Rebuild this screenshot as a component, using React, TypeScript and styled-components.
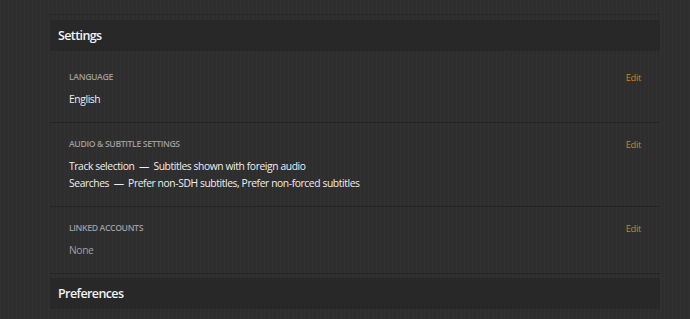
import styled, { createGlobalStyle } from 'styled-components';

interface SettingSection {
    title: string;
    values: string[];
    muted?: boolean;
}

const sections: SettingSection[] = [
    { title: 'Language', values: ['English'] },
    {
        title: 'Audio & Subtitle Settings',
        values: [
            'Track selection \u00a0\u2014\u00a0 Subtitles shown with foreign audio',
            'Searches \u00a0\u2014\u00a0 Prefer non-SDH subtitles, Prefer non-forced subtitles',
        ],
    },
    { title: 'Linked Accounts', values: ['None'], muted: true },
];

function App(): JSX.Element {
    return (
        <Page>
            <GlobalStyle />
            <TopRule />
            <PanelHeader>Settings</PanelHeader>
            <SectionList>
                {sections.map(section => (
                    <Section key={section.title}>
                        <SectionTop>
                            <Label>{section.title}</Label>
                            <EditLink href="#">Edit</EditLink>
                        </SectionTop>
                        {section.values.map(value => (
                            <Value key={value} $muted={section.muted}>{value}</Value>
                        ))}
                    </Section>
                ))}
            </SectionList>
            <PanelHeader $spaced>Preferences</PanelHeader>
        </Page>
    );
}

const GlobalStyle = createGlobalStyle`
  html, body {
    margin: 0;
    padding: 0;
    background-color: #2e2e2e;
  }
  body {
    font-family: "Open Sans", "Liberation Sans", sans-serif;
  }
`;

const Page = styled.div`
  width: 690px;
  height: 319px;
  box-sizing: border-box;
  padding: 14px 30px 0 50px;
  overflow: hidden;
  background-color: #2e2e2e;
  background-image: repeating-linear-gradient(
    90deg,
    rgba(255, 255, 255, 0.014) 0px,
    rgba(255, 255, 255, 0.014) 1px,
    rgba(0, 0, 0, 0.025) 2px,
    rgba(0, 0, 0, 0) 4px
  );
`;

const TopRule = styled.div`
  height: 1px;
  margin-left: -2px;
  background: #272727;
`;

const PanelHeader = styled.div<{ $spaced?: boolean }>`
  height: 31px;
  margin-top: ${p => (p.$spaced ? '4px' : '5px')};
  padding-left: 8px;
  display: flex;
  align-items: center;
  background: #282828;
  border-radius: 2px;
  color: #f3f3f3;
  font-size: 12.5px;
  font-weight: 600;
  letter-spacing: -0.6px;
`;

const SectionList = styled.div`
  margin-top: 5px;
  display: flex;
  flex-direction: column;
`;

const Section = styled.div`
  padding: 15px 19px 14px;
  border-bottom: 1px solid #242424;
`;

const SectionTop = styled.div`
  display: flex;
  justify-content: space-between;
  align-items: center;
  height: 12px;
  margin-bottom: 8px;
`;

const Label = styled.span`
  color: #9d9d9d;
  font-size: 8.7px;
  font-weight: 600;
  text-transform: uppercase;
  letter-spacing: -0.38px;
`;

const EditLink = styled.a`
  color: #d3811f;
  font-size: 9.3px;
  letter-spacing: -0.3px;
  text-decoration: none;
`;

const Value = styled.div<{ $muted?: boolean }>`
  line-height: 17px;
  font-size: 10.3px;
  letter-spacing: -0.4px;
  color: ${p => (p.$muted ? '#a0a0a0' : '#eeeeee')};
`;

export default App;
